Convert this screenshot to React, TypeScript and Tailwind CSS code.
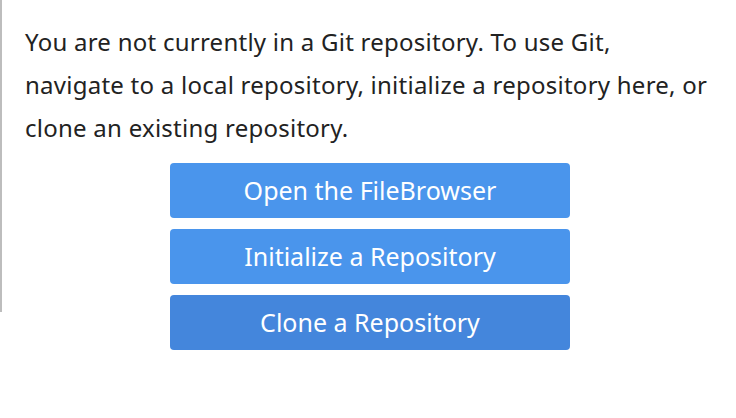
export default function App() {
  const buttons = [
    { label: 'Open the FileBrowser', dark: false },
    { label: 'Initialize a Repository', dark: false },
    { label: 'Clone a Repository', dark: true },
  ];

  return (
    <div className="flex min-h-[418px] w-[736px] bg-white font-['Noto_Sans',sans-serif]">
      <div className="h-[312px] w-[2px] shrink-0 bg-[#bdbdbd]" />
      <div className="flex flex-1 flex-col pl-[23px] pr-[21px] pt-[20px]">
        <p className="text-[24px] leading-[43px] tracking-[0.25px] text-[#222]">
          You are not currently in a Git repository. To use Git,
          <br />
          navigate to a local repository, initialize a repository here, or clone an existing
          repository.
        </p>
        <div className="mt-[14px] flex flex-col items-center gap-[11px]">
          {buttons.map((b) => (
            <button
              key={b.label}
              className={`h-[55px] w-[400px] rounded-[4px] text-[25px] text-white ${
                b.dark ? 'bg-[#4486dc]' : 'bg-[#4a95ec]'
              }`}
            >
              {b.label}
            </button>
          ))}
        </div>
      </div>
    </div>
  );
}
